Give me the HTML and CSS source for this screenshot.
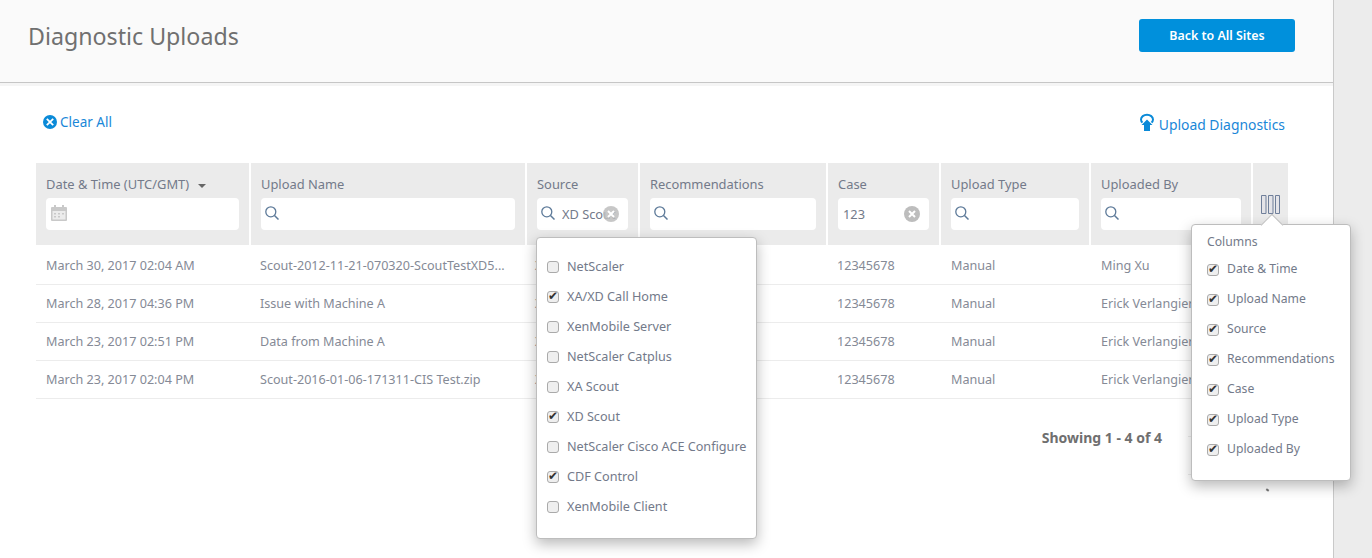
FILE: index.html
```html
<!DOCTYPE html>
<html lang="en">
<head>
    <meta charset="UTF-8">
    <meta name="viewport" content="width=device-width, initial-scale=1.0">
    <title>Diagnostic Uploads</title>
    <link rel="stylesheet" href="styles.css">
</head>
<body>
    <div class="page">
        <main class="main">
            <header class="top">
                <h1>Diagnostic Uploads</h1>
                <button class="back">Back to All Sites</button>
            </header>

            <div class="toolbar">
                <a class="clear-all">
                    <svg width="14" height="14" viewBox="0 0 14 14"><circle cx="7" cy="7" r="7" fill="#0a8ad8"/><path d="M3.800 3.800l6.400 6.400M10.200 3.800l-6.400 6.400" stroke="#fff" stroke-width="1.800"/></svg>
                    Clear All
                </a>
                <a class="upload">
                    <svg width="16" height="19" viewBox="0 0 16 19"><ellipse cx="8" cy="6.500" rx="6" ry="4.800" fill="none" stroke="#0a8ad8" stroke-width="2"/><path d="M8 5l7 7h-3.500v7h-7v-7H1z" fill="#fff"/><path d="M8 6.500l5.500 5.500H11v6H5v-6H2.500z" fill="#0a8ad8"/></svg>
                    Upload Diagnostics
                </a>
            </div>

            <div class="grid head">
                <div class="th">
                    <div class="label">Date &amp; Time (UTC/GMT) <span class="caret"></span></div>
                    <div class="filter">
                        <svg class="cal" width="16" height="16" viewBox="0 0 16 16"><rect x="3" y="0" width="2" height="3" fill="#c9c9c9"/><rect x="11" y="0" width="2" height="3" fill="#c9c9c9"/><rect x="0" y="2" width="16" height="14" rx="1" fill="#c9c9c9"/><rect x="1.500" y="6" width="13" height="8.500" fill="#ececec"/><path d="M3 8h2v1.500H3zM7 8h2v1.500H7zM11 8h2v1.500h-2zM3 11h2v1.500H3zM7 11h2v1.500H7z" fill="#c9c9c9"/></svg>
                    </div>
                </div>
                <div class="th">
                    <div class="label">Upload Name</div>
                    <div class="filter">
                        <svg class="search" width="14" height="14" viewBox="0 0 14 14"><circle cx="5.800" cy="5.800" r="5" fill="none" stroke="#5d7a99" stroke-width="1.300"/><path d="M9.500 9.500l4 4" stroke="#5d7a99" stroke-width="1.500"/></svg>
                    </div>
                </div>
                <div class="th">
                    <div class="label">Source</div>
                    <div class="filter">
                        <svg class="search" width="14" height="14" viewBox="0 0 14 14"><circle cx="5.800" cy="5.800" r="5" fill="none" stroke="#5d7a99" stroke-width="1.300"/><path d="M9.500 9.500l4 4" stroke="#5d7a99" stroke-width="1.500"/></svg>
                        <input class="filter-text" type="text" value="XD Scout">
                        <svg class="clear" width="16" height="16" viewBox="0 0 16 16"><circle cx="8" cy="8" r="8" fill="#bdbdbd" fill-opacity="0.85"/><path d="M5 5l6 6M11 5l-6 6" stroke="#fff" stroke-width="2"/></svg>
                    </div>
                </div>
                <div class="th">
                    <div class="label">Recommendations</div>
                    <div class="filter">
                        <svg class="search" width="14" height="14" viewBox="0 0 14 14"><circle cx="5.800" cy="5.800" r="5" fill="none" stroke="#5d7a99" stroke-width="1.300"/><path d="M9.500 9.500l4 4" stroke="#5d7a99" stroke-width="1.500"/></svg>
                    </div>
                </div>
                <div class="th">
                    <div class="label">Case</div>
                    <div class="filter">
                        <input class="filter-text plain" type="text" value="123">
                        <svg class="clear" width="16" height="16" viewBox="0 0 16 16"><circle cx="8" cy="8" r="8" fill="#bdbdbd"/><path d="M5 5l6 6M11 5l-6 6" stroke="#fff" stroke-width="2"/></svg>
                    </div>
                </div>
                <div class="th">
                    <div class="label">Upload Type</div>
                    <div class="filter">
                        <svg class="search" width="14" height="14" viewBox="0 0 14 14"><circle cx="5.800" cy="5.800" r="5" fill="none" stroke="#5d7a99" stroke-width="1.300"/><path d="M9.500 9.500l4 4" stroke="#5d7a99" stroke-width="1.500"/></svg>
                    </div>
                </div>
                <div class="th">
                    <div class="label">Uploaded By</div>
                    <div class="filter">
                        <svg class="search" width="14" height="14" viewBox="0 0 14 14"><circle cx="5.800" cy="5.800" r="5" fill="none" stroke="#5d7a99" stroke-width="1.300"/><path d="M9.500 9.500l4 4" stroke="#5d7a99" stroke-width="1.500"/></svg>
                    </div>
                </div>
                <div class="th col-toggle">
                    <svg width="19" height="19" viewBox="0 0 19 19"><path d="M.5.500h4.500v18H.5zM7.500.500H12v18H7.500zM14.500.500H18.500v18h-4z" fill="#e4e4e8" stroke="#6f7f9a"/></svg>
                </div>
            </div>

            <div class="rows">
                <div class="grid row">
                    <div class="td">March 30, 2017 02:04 AM</div>
                    <div class="td tight">Scout-2012-11-21-070320-ScoutTestXD5...</div>
                    <div class="td source">XD Scout</div>
                    <div class="td">None</div>
                    <div class="td tight">12345678</div>
                    <div class="td">Manual</div>
                    <div class="td">Ming Xu</div>
                    <div class="td"></div>
                </div>
                <div class="grid row">
                    <div class="td">March 28, 2017 04:36 PM</div>
                    <div class="td tight">Issue with Machine A</div>
                    <div class="td source">XD Scout</div>
                    <div class="td">None</div>
                    <div class="td tight">12345678</div>
                    <div class="td">Manual</div>
                    <div class="td">Erick Verlangieri</div>
                    <div class="td"></div>
                </div>
                <div class="grid row">
                    <div class="td">March 23, 2017 02:51 PM</div>
                    <div class="td tight">Data from Machine A</div>
                    <div class="td source">XD Scout</div>
                    <div class="td">None</div>
                    <div class="td tight">12345678</div>
                    <div class="td">Manual</div>
                    <div class="td">Erick Verlangieri</div>
                    <div class="td"></div>
                </div>
                <div class="grid row">
                    <div class="td">March 23, 2017 02:04 PM</div>
                    <div class="td tight">Scout-2016-01-06-171311-CIS Test.zip</div>
                    <div class="td source">XD Scout</div>
                    <div class="td">None</div>
                    <div class="td tight">12345678</div>
                    <div class="td">Manual</div>
                    <div class="td">Erick Verlangieri</div>
                    <div class="td"></div>
                </div>
            </div>

            <div class="pager">
                <span class="showing">Showing 1 - 4 of 4</span>
                <div class="pager-box"></div>
            </div>

            <div class="popup source-menu">
                <label class="check"><input type="checkbox"> NetScaler</label>
                <label class="check"><input type="checkbox" checked> XA/XD Call Home</label>
                <label class="check"><input type="checkbox"> XenMobile Server</label>
                <label class="check"><input type="checkbox"> NetScaler Catplus</label>
                <label class="check"><input type="checkbox"> XA Scout</label>
                <label class="check"><input type="checkbox" checked> XD Scout</label>
                <label class="check"><input type="checkbox"> NetScaler Cisco ACE Configure</label>
                <label class="check"><input type="checkbox" checked> CDF Control</label>
                <label class="check"><input type="checkbox"> XenMobile Client</label>
            </div>

            <div class="popup columns-menu">
                <div class="columns-title">Columns</div>
                <label class="check"><input type="checkbox" checked> Date &amp; Time</label>
                <label class="check"><input type="checkbox" checked> Upload Name</label>
                <label class="check"><input type="checkbox" checked> Source</label>
                <label class="check"><input type="checkbox" checked> Recommendations</label>
                <label class="check"><input type="checkbox" checked> Case</label>
                <label class="check"><input type="checkbox" checked> Upload Type</label>
                <label class="check"><input type="checkbox" checked> Uploaded By</label>
            </div>
        </main>
        <div class="gutter"></div>
    </div>
</body>
</html>
```

FILE: styles.css
```css
* {
    box-sizing: border-box;
}
html, body {
    margin: 0;
    height: 100%;
    overflow: hidden;
}
body {
    font-family: "Noto Sans", "Open Sans", sans-serif;
    font-size: 13px;
    color: #858a96;
    background-color: #fff;
}
.page {
    display: flex;
    height: 100%;
}
.main {
    position: relative;
    width: 1334px;
    border-right: 1px solid #c9c9c9;
}
.gutter {
    flex: 1;
    background-color: #ececec;
}

/* header */
.top {
    height: 83px;
    display: flex;
    justify-content: space-between;
    padding: 19px 38px 0 28px;
    background-color: #fafafa;
    border-bottom: 1px solid #c6c6c6;
}
.top h1 {
    margin: 0;
    font-size: 23.2px;
    font-weight: 400;
    line-height: 34px;
    color: #707070;
}
.back {
    width: 156px;
    height: 33px;
    padding-bottom: 2px;
    border: none;
    border-radius: 3px;
    background-color: #0090dc;
    color: #fff;
    font-family: inherit;
    font-size: 12.4px;
    font-weight: 600;
}

/* toolbar */
.toolbar {
    height: 80px;
    display: flex;
    justify-content: space-between;
    align-items: flex-start;
    padding: 26px 48px 0 43px;
    border-top: 3px solid #f5f5f5;
    font-size: 13.5px;
    color: #1a87d8;
}
.clear-all, .upload {
    display: flex;
    align-items: center;
    line-height: 20px;
}
.clear-all svg {
    margin-right: 3px;
}
.upload {
    margin-top: 3px;
    font-size: 13.9px;
}
.upload svg {
    margin: -5px 4px 0 0;
}

/* table */
.grid {
    display: grid;
    grid-template-columns: 213px 274px 111px 186px 111px 148px 160px 35px;
    column-gap: 2px;
    margin-left: 36px;
    width: 1252px;
}
.th {
    height: 82px;
    padding: 11px 10px 0;
    background-color: #ebebeb;
    color: #737a8a;
    font-size: 12.9px;
}
.label {
    height: 24px;
    line-height: 20px;
    white-space: nowrap;
}
.caret {
    display: inline-block;
    margin: 0 0 1px 6px;
    border-top: 4px solid #666;
    border-left: 4px solid transparent;
    border-right: 4px solid transparent;
}
.filter {
    position: relative;
    display: flex;
    align-items: center;
    height: 32px;
    padding-left: 4px;
    border-radius: 4px;
    background-color: #fff;
}
.filter .cal {
    margin: -2px 0 0 1px;
}
.filter .search {
    flex: none;
    margin-top: -2px;
}
.filter-text {
    flex: 1;
    width: 0;
    margin-left: 7px;
    padding: 0;
    border: none;
    outline: none;
    background: none;
    font-family: inherit;
    font-size: 12.8px;
    color: #737a8a;
}
.filter-text.plain {
    margin-left: 1px;
}
.clear {
    position: absolute;
    top: 8px;
    right: 9px;
}
.col-toggle {
    padding: 32px 0 0 8px;
}
.col-toggle svg {
    display: block;
}
.rows {
    padding-top: 2px;
    font-size: 12.6px;
}
.row {
    height: 38px;
    border-bottom: 1px solid #ececec;
}
.td {
    padding-left: 10px;
    line-height: 37px;
    white-space: nowrap;
    overflow: hidden;
}
.td.tight {
    padding-left: 9px;
}
.td.source {
    padding-left: 8px;
}

/* pager */
.pager {
    display: flex;
    margin: 27px 45px 0 0;
    justify-content: flex-end;
}
.showing {
    margin-right: 26px;
    font-size: 14px;
    font-weight: 700;
    line-height: 24px;
    color: #6f6f6f;
}
.pager-box {
    position: relative;
    width: 100px;
    height: 39px;
    margin-top: 10px;
    border-top: 1px solid #ececec;
    border-bottom: 1px solid #ececec;
}
.pager-box::after {
    content: "";
    position: absolute;
    left: 78px;
    top: 52px;
    width: 3px;
    height: 2px;
    background-color: #777;
    transform: rotate(35deg);
}

/* popups */
.popup {
    position: absolute;
    background-color: #fff;
    border: 1px solid #bdbdbd;
    border-radius: 4px;
    box-shadow: 0 5px 14px rgba(0, 0, 0, 0.28);
    color: #737a8a;
    font-size: 12.65px;
}
.source-menu {
    left: 536px;
    top: 237px;
    width: 221px;
    height: 302px;
    padding: 13px 0 0 10px;
}
.columns-menu {
    left: 1191px;
    top: 224px;
    width: 160px;
    height: 257px;
    padding: 7px 0 0 15px;
    font-size: 12.2px;
}
.columns-menu::before {
    content: "";
    position: absolute;
    left: 72px;
    top: -8px;
    width: 15px;
    height: 15px;
    background-color: #fff;
    border-left: 1px solid #bdbdbd;
    border-top: 1px solid #bdbdbd;
    transform: rotate(45deg);
}
.columns-title {
    line-height: 20px;
    margin-bottom: 1px;
}
.check {
    display: flex;
    align-items: center;
    height: 30px;
    white-space: nowrap;
}
.check input {
    appearance: none;
    position: relative;
    flex: none;
    width: 12px;
    height: 12px;
    margin: 1px 8px 0 0;
    border: 1px solid #aaa;
    border-radius: 3px;
    background-color: #efefef;
}
.columns-menu .check input {
    margin-top: 4px;
}
.check input:checked::after {
    content: "\2714";
    position: absolute;
    left: 0;
    top: -3px;
    font-family: "DejaVu Sans", sans-serif;
    font-size: 12px;
    line-height: 14px;
    color: #333;
}
```
